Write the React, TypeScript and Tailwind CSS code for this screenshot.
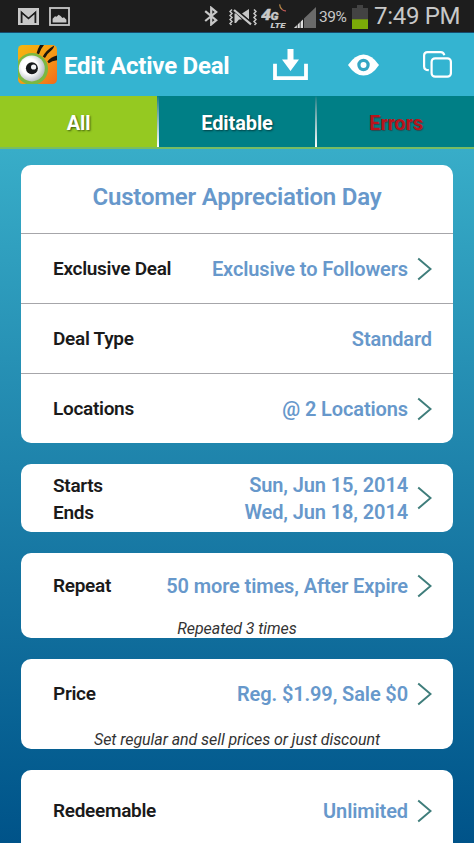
import type { ReactNode } from "react";

function GmailIcon() {
  return (
    <svg width="21" height="17" viewBox="0 0 21 17">
      <rect width="21" height="17" fill="#c8c8c8" />
      <path d="M3.6 15V4.2l6.900 6 6.900-6V15" fill="none" stroke="#1d1d1d" strokeWidth="1.8" />
      <path d="M3 1.6l7.5 6.6L18 1.6" fill="none" stroke="#c8c8c8" strokeWidth="1.6" />
    </svg>
  );
}

function GalleryIcon() {
  return (
    <svg width="21" height="19" viewBox="0 0 21 19">
      <rect x="1" y="1" width="19" height="17" fill="none" stroke="#c8c8c8" strokeWidth="1.8" />
      <path d="M3.600 15.400v-3.600l2.400-2.600 1.600.6 2-2 2 1.200 1.800 2 1.600-.8 2.400 2.600v2.600z" fill="#c8c8c8" />
    </svg>
  );
}

function BluetoothIcon() {
  return (
    <svg width="14" height="20" viewBox="0 0 14 20" fill="none" stroke="#c8c8c8" strokeWidth="2.2">
      <path d="M1.2 5.2l11 9-5 4.2V1.8l5 4.2-11 9" />
    </svg>
  );
}

function MuteIcon() {
  return (
    <svg width="28" height="18" viewBox="0 0 28 18" fill="none" stroke="#c8c8c8">
      <path d="M3 1.500l-2 2 2 2-2 2 2 2-2 2 2 2-2 2 1.500 1.500" strokeWidth="1.500" />
      <path d="M25 1.500l2 2-2 2 2 2-2 2 2 2-2 2 2 2-1.500 1.500" strokeWidth="1.500" />
      <path d="M5.500 5.500h1.500l6 6-3 0-3 3.500H5.500z" fill="#c8c8c8" stroke="none" />
      <path d="M13 5.500L20 1v10.500z" fill="#c8c8c8" stroke="none" />
      <path d="M5.600 .6l17 14.600" stroke="#1d1d1d" strokeWidth="2" />
      <path d="M5 2l17 14.400" strokeWidth="2.200" />
    </svg>
  );
}

function NetworkIcon() {
  return (
    <svg width="26" height="26" viewBox="0 0 26 26">
      <g fill="#c8c8c8" stroke="#c8c8c8" strokeWidth=".3" fontFamily="Roboto, sans-serif" fontWeight="900" fontStyle="italic">
        <text x="0" y="17" fontSize="15" textLength="10" lengthAdjust="spacingAndGlyphs">4</text>
        <text x="9.500" y="16.600" fontSize="11.500" textLength="8" lengthAdjust="spacingAndGlyphs">G</text>
        <text x="9.500" y="24.800" fontSize="8" textLength="15" lengthAdjust="spacingAndGlyphs" strokeWidth="0">LTE</text>
      </g>
      <path d="M18.600 1.400q.3 3.600 2.600 5" fill="none" stroke="#b98a4a" strokeWidth="1.200" />
      <path d="M21 6.400q1.600 1.600 4 1.400" fill="none" stroke="#c05a58" strokeWidth="1.200" />
    </svg>
  );
}

function SignalIcon() {
  return (
    <svg width="22" height="21" viewBox="0 0 22 21">
      <path d="M22 0v21H0z" fill="#6a6a6a" />
      <path d="M0 21L9 12.4V21z" fill="#dedede" />
      <path d="M3.3 14v7M6.2 14v7" stroke="#1d1d1d" strokeWidth=".8" />
      <path d="M9.5 11v10" stroke="#1d1d1d" strokeWidth="1" />
    </svg>
  );
}

function BatteryIcon() {
  return (
    <svg width="16" height="24" viewBox="0 0 16 24">
      <path d="M5 0h6v3h5v21H0V3h5z" fill="#434343" />
      <path d="M0 14.3h16V24H0z" fill="#7cab08" />
    </svg>
  );
}

function AppLogo() {
  return (
    <svg width="39" height="39" viewBox="0 0 39 39">
      <defs>
        <linearGradient id="tile" x1="0" y1="0" x2="1" y2="1">
          <stop offset="0" stopColor="#f5b60f" />
          <stop offset=".55" stopColor="#f59a16" />
          <stop offset="1" stopColor="#f26a1b" />
        </linearGradient>
        <radialGradient id="ball" cx=".4" cy=".42" r=".6">
          <stop offset=".5" stopColor="#ffffff" />
          <stop offset="1" stopColor="#b9bfc4" />
        </radialGradient>
        <clipPath id="tileClip">
          <rect width="39" height="39" rx="4.5" />
        </clipPath>
      </defs>
      <g clipPath="url(#tileClip)">
        <rect width="39" height="39" fill="url(#tile)" />
        <circle cx="14" cy="24" r="16" fill="#7bb842" />
        <path d="M18.6 8.2Q19.8 3.6 22 0h4q-3.500 4-5 9.200z" fill="#1c170d" />
        <path d="M24.800 11.600Q28 5 36.200.4q-.6 3.400-2.400 4.600-4.400 3.400-6.800 8z" fill="#1c170d" />
        <path d="M29.400 16.600q3.200-4.400 9.600-6v4.600q-5 .4-8.200 3z" fill="#1c170d" />
      </g>
      <circle cx="13.8" cy="23.4" r="13" fill="url(#ball)" />
      <circle cx="13.9" cy="23.2" r="6" fill="#17191b" />
      <circle cx="15.600" cy="22" r="2.600" fill="#f2f4f5" />
    </svg>
  );
}

function DownloadIcon() {
  return (
    <svg width="35" height="32" viewBox="0 0 35 32" fill="#fff">
      <path d="M14.500 0h6v10.500h5.500L17.500 22 9 10.500h5.500z" />
      <path d="M2 14.800v14.400h31V14.800" fill="none" stroke="#fff" strokeWidth="3.800" />
    </svg>
  );
}

function EyeIcon() {
  return (
    <svg width="31" height="22" viewBox="0 0 31 22">
      <path d="M0 11Q7 .4 15.500.4T31 11Q24 21.600 15.500 21.600T0 11z" fill="#fff" />
      <circle cx="15.500" cy="11" r="4.600" fill="none" stroke="#34a6c4" strokeWidth="3.200" />
    </svg>
  );
}

function CopyIcon() {
  return (
    <svg width="29" height="27" viewBox="0 0 29 27" fill="none" stroke="#fff" strokeWidth="2.200">
      <path d="M21.300 4.200Q20.600 1.100 17.800 1.100H4.600Q1.100 1.100 1.100 4.600V15.400Q1.100 18.900 5.800 19.200" />
      <rect x="8.600" y="7.300" width="19.300" height="18.400" rx="3.500" />
    </svg>
  );
}

function Chevron() {
  return (
    <svg width="15" height="24" viewBox="0 0 15 24" className="ml-[9px] shrink-0">
      <path d="M1.200 1.400L13.600 12 1.200 22.600" fill="none" stroke="#3f7d7b" strokeWidth="2" />
    </svg>
  );
}

function StatusBar() {
  return (
    <div className="flex h-[33px] shrink-0 items-start border-b border-[#164a6b] bg-[#1d1d1d] pl-[18px]">
      <div className="flex w-[186px] gap-[10px] pt-[7px]">
        <div className="pt-px">
          <GmailIcon />
        </div>
        <GalleryIcon />
      </div>
      <div className="pt-[6px]">
        <BluetoothIcon />
      </div>
      <div className="ml-[11px] pt-[8px]">
        <MuteIcon />
      </div>
      <div className="ml-1 pt-[3px]">
        <NetworkIcon />
      </div>
      <div className="ml-[7px] pt-[7px]">
        <SignalIcon />
      </div>
      <span className="ml-[3px] w-[33px] pt-[7px] text-[15.5px] leading-5 tracking-[-0.4px] text-[#c8c8c8]">39%</span>
      <div className="pt-[5px]">
        <BatteryIcon />
      </div>
      <span className="ml-[6px] text-[24px] leading-[33px] tracking-[-0.3px] whitespace-nowrap text-[#c8c8c8]">
        7:49 PM
      </span>
    </div>
  );
}

function Header() {
  return (
    <header className="flex h-[63px] shrink-0 items-center bg-[#34b4d1] pl-[18px]">
      <AppLogo />
      <h1 className="ml-[7px] w-[209px] pt-[2px] text-[24px] leading-8 font-bold tracking-[-0.22px] whitespace-nowrap text-white">
        Edit Active Deal
      </h1>
      <DownloadIcon />
      <div className="ml-[40px]">
        <EyeIcon />
      </div>
      <div className="ml-[44px]">
        <CopyIcon />
      </div>
    </header>
  );
}

function TabDivider() {
  return <div className="h-full w-[2px] bg-linear-to-b from-[#007f86] to-white" />;
}

function Tabs() {
  return (
    <nav className="flex h-[53px] shrink-0 border-b-2 border-[#78bd62] bg-[#007f86] text-[20px] leading-[54px] font-bold tracking-[-0.1px] text-white">
      <div className="w-[157px] bg-[#95c921] text-center [text-shadow:1px_1px_2px_#3f5c10]">All</div>
      <TabDivider />
      <div className="w-[156px] text-center [text-shadow:1px_1px_2px_#033f43]">Editable</div>
      <TabDivider />
      <div className="flex-1 pl-px text-center text-[#b9131b] [text-shadow:1px_1px_1px_#2b4a50]">Errors</div>
    </nav>
  );
}

function Card({ className, children }: { className: string; children: ReactNode }) {
  return <section className={`shrink-0 overflow-hidden rounded-[10px] bg-white ${className}`}>{children}</section>;
}

type RowProps = {
  label: string;
  value: string;
  link?: boolean;
  className?: string;
};

function Row({ label, value, link = true, className = "h-[70px]" }: RowProps) {
  return (
    <div className={`flex items-center pr-[21px] pl-8 whitespace-nowrap ${className}`}>
      <span className="flex-1 pt-px text-[19px] font-semibold tracking-[-0.3px] text-[#1a1a1a]">{label}</span>
      <span className="text-[20px] font-semibold tracking-[-0.12px] text-[#6798cb]">{value}</span>
      {link && <Chevron />}
    </div>
  );
}

function Note({ children }: { children: ReactNode }) {
  return <p className="pt-px text-center text-[16px] leading-5 tracking-[-0.07px] text-[#333] italic">{children}</p>;
}

export default function App() {
  return (
    <div className="flex h-[843px] w-[474px] flex-col overflow-hidden font-[Roboto,sans-serif]">
      <StatusBar />
      <Header />
      <Tabs />
      <main className="flex min-h-0 flex-1 flex-col gap-[21px] bg-linear-to-b from-[#38adc8] to-[#005389] px-[21px] pt-4">
        <Card className="h-[278px] divide-y divide-[#a6a6aa]">
          <h2 className="h-[69px] text-center text-[24px] leading-[65px] font-semibold tracking-[-0.22px] text-[#6798cb]">
            Customer Appreciation Day
          </h2>
          <Row label="Exclusive Deal" value="Exclusive to Followers" />
          <Row label="Deal Type" value="Standard" link={false} />
          <Row label="Locations" value="@ 2 Locations" />
        </Card>

        <Card className="h-[68px]">
          <div className="flex h-full items-center pr-[21px] pl-8 leading-[27px] font-semibold whitespace-nowrap">
            <div className="flex-1 pt-[2px] text-[19px] tracking-[-0.3px] text-[#1a1a1a]">
              <div>Starts</div>
              <div>Ends</div>
            </div>
            <div className="pt-px text-right text-[20px] tracking-[-0.12px] text-[#6798cb]">
              <div>Sun, Jun 15, 2014</div>
              <div>Wed, Jun 18, 2014</div>
            </div>
            <Chevron />
          </div>
        </Card>

        <Card className="h-[85px]">
          <Row label="Repeat" value="50 more times, After Expire" className="h-[65px]" />
          <Note>Repeated 3 times</Note>
        </Card>

        <Card className="h-[90px]">
          <Row label="Price" value="Reg. $1.99, Sale $0" />
          <Note>Set regular and sell prices or just discount</Note>
        </Card>

        <Card className="h-[90px]">
          <Row label="Redeemable" value="Unlimited" className="h-[81px]" />
        </Card>
      </main>
    </div>
  );
}
